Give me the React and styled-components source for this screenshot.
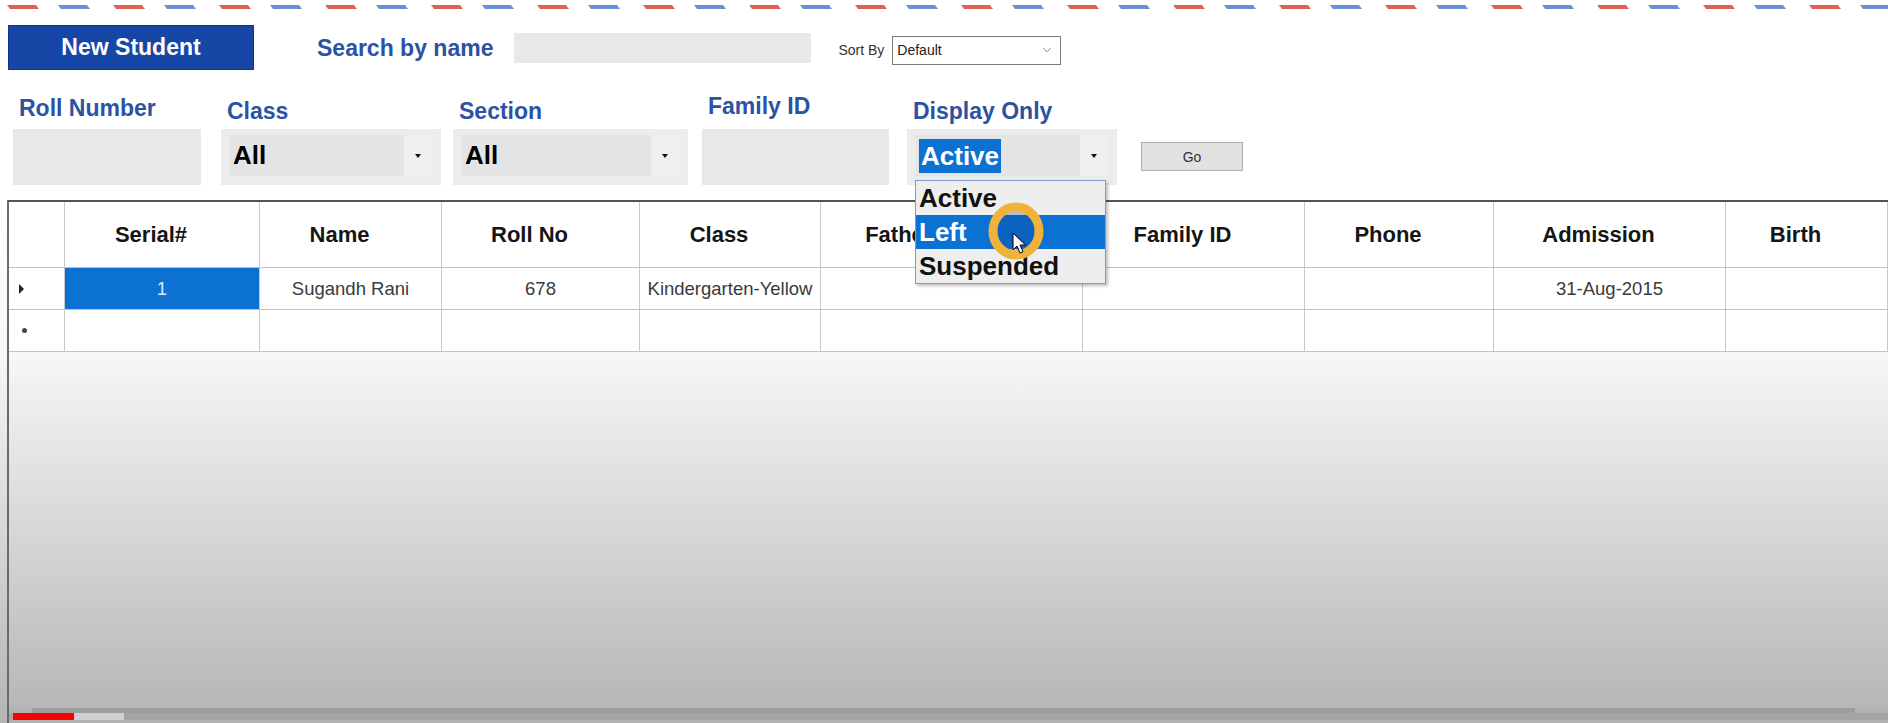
import React from "react";
import styled, { createGlobalStyle } from "styled-components";
import { ChevronDown } from "lucide-react";

const GlobalStyle = createGlobalStyle`
  html, body {
    margin: 0;
    padding: 0;
  }
  body {
    font-family: "Liberation Sans", Arial, sans-serif;
    background: #ffffff;
  }
`;

const Page = styled.div`
  width: 1888px;
  height: 723px;
  overflow: hidden;
  display: flex;
  flex-direction: column;
  background: #ffffff;
`;

const StripeBar = styled.div`
  height: 12px;
  flex-shrink: 0;

  svg {
    display: block;
  }
`;

const TopBar = styled.div`
  display: flex;
  align-items: center;
  height: 45px;
  margin-top: 13px;
  padding-left: 8px;
  flex-shrink: 0;
`;

const NewStudentButton = styled.button`
  width: 246px;
  height: 45px;
  background: #1747a6;
  border: 1px solid #0e3789;
  color: #ffffff;
  font-family: inherit;
  font-size: 23px;
  font-weight: bold;
  padding: 0;
`;

const BlueLabel = styled.span`
  color: #2b52a3;
  font-size: 23px;
  font-weight: bold;
  line-height: 26px;
  white-space: nowrap;
`;

const SearchLabel = styled(BlueLabel)`
  margin-left: 63px;
`;

const SearchInput = styled.div`
  margin-left: 21px;
  width: 297px;
  height: 30px;
  background: #e9e9e9;
`;

const SortLabel = styled.span`
  margin-left: 27px;
  font-size: 14px;
  color: #333333;
  margin-top: 4px;
`;

const SortSelect = styled.div`
  margin-left: 8px;
  margin-top: 5px;
  width: 169px;
  height: 29px;
  box-sizing: border-box;
  border: 1px solid #7a7a7a;
  background: #ffffff;
  display: flex;
  align-items: center;
  justify-content: space-between;
  padding: 0 6px 0 4px;
  font-size: 14px;
  color: #222222;
`;

const FilterRow = styled.div`
  display: flex;
  align-items: flex-end;
  height: 88px;
  margin-top: 27px;
  padding-left: 13px;
  flex-shrink: 0;
`;

const FilterGroup = styled.div`
  display: flex;
  flex-direction: column;
  width: ${(p) => p.$w}px;
  margin-left: ${(p) => p.$ml || 0}px;
`;

const FieldLabel = styled(BlueLabel)`
  height: 32px;
  box-sizing: border-box;
  display: flex;
  align-items: flex-end;
  padding-left: 6px;
  padding-bottom: ${(p) => p.$pb}px;
`;

const TextField = styled.div`
  height: 56px;
  background: #e8e8e8;
`;

const ComboPanel = styled.div`
  position: relative;
  height: 56px;
  box-sizing: border-box;
  background: #ececec;
  padding: 6px 9px 9px 9px;
  display: flex;
`;

const ComboField = styled.div`
  flex: 1;
  background: #e4e4e4;
  display: flex;
  align-items: center;
  padding-left: 3px;
  font-size: 26px;
  font-weight: bold;
  color: #000000;
`;

const ComboArrow = styled.div`
  width: 28px;
  background: #efefef;
  display: flex;
  align-items: center;
  justify-content: center;

  &::after {
    content: "";
    border-left: 3px solid transparent;
    border-right: 3px solid transparent;
    border-top: 4px solid #111111;
  }
`;

const SelectedText = styled.span`
  background: #0b72d4;
  color: #ffffff;
  height: 34px;
  line-height: 34px;
  padding: 0 2px;
`;

const DropList = styled.div`
  position: absolute;
  top: 51px;
  left: 8px;
  width: 191px;
  box-sizing: border-box;
  border: 1px solid #7f9ccb;
  background: #eeeeee;
  box-shadow: 2px 2px 3px rgba(0, 0, 0, 0.25);
  z-index: 5;
`;

const DropItem = styled.div`
  height: 34px;
  line-height: 34px;
  padding-left: 3px;
  font-size: 26px;
  font-weight: bold;
  color: ${(p) => (p.$active ? "#ffffff" : "#111111")};
  background: ${(p) => (p.$active ? "#0b72d4" : "transparent")};
`;

const CursorMark = styled.svg`
  position: absolute;
  left: 69px;
  top: 18px;
  pointer-events: none;
`;

const GoButton = styled.button`
  margin-left: 24px;
  margin-bottom: 14px;
  width: 102px;
  height: 29px;
  background: #e1e1e1;
  border: 1px solid #adadad;
  font-family: inherit;
  font-size: 14px;
  color: #333333;
  padding: 0;
`;

const GridSection = styled.div`
  flex: 1;
  margin-top: 15px;
  padding-left: 7px;
  display: flex;
  flex-direction: column;
  background: linear-gradient(
    to bottom,
    #ffffff 0%,
    #f8f8f8 28%,
    #d8d8d8 62%,
    #b4b4b4 100%
  );
`;

const GridBox = styled.div`
  flex: 1;
  display: flex;
  flex-direction: column;
  border-left: 2px solid #6b6b6b;
  border-top: 2px solid #555555;
`;

const columns = "56px 195px 182px 198px 181px 262px 222px 189px 232px 1fr";

const GridRow = styled.div`
  display: grid;
  grid-template-columns: ${columns};
  height: ${(p) => p.$h}px;
  background: #ffffff;
`;

const Cell = styled.div`
  display: flex;
  align-items: center;
  justify-content: center;
  padding-right: ${(p) => (p.$head ? 22 : 0)}px;
  border-right: 1px solid #c8c8c8;
  border-bottom: 1px solid #c3c3c3;
  white-space: nowrap;
  overflow: hidden;
  font-size: ${(p) => (p.$head ? 22 : 18.5)}px;
  font-weight: ${(p) => (p.$head ? "bold" : "normal")};
  color: ${(p) => (p.$selected ? "#dbe9f8" : p.$head ? "#151515" : "#3a3a3a")};
  background: ${(p) => (p.$selected ? "#0b72d4" : "#ffffff")};
`;

const RowMark = styled.div`
  display: flex;
  align-items: center;
  padding-left: 10px;
  border-right: 1px solid #c8c8c8;
  border-bottom: 1px solid #c3c3c3;
`;

const RowArrow = styled.span`
  border-top: 5px solid transparent;
  border-bottom: 5px solid transparent;
  border-left: 5px solid #222222;
`;

const RowDot = styled.span`
  width: 5px;
  height: 5px;
  margin-left: 3px;
  border-radius: 50%;
  background: #444444;
`;

const Filler = styled.div`
  flex: 1;
`;

const ScrollTrack = styled.div`
  height: 15px;
  display: flex;
  flex-direction: column;
  background: #b2b2b2;
`;

const ThumbBand = styled.div`
  height: 5px;
  margin: 0 33px 0 23px;
  background: #9d9d9d;
`;

const ProgressBand = styled.div`
  height: 7px;
  display: flex;
  background: #a4a4a4;
`;

const ProgressPart = styled.div`
  width: ${(p) => p.$w}px;
  margin-left: ${(p) => p.$ml || 0}px;
  background: ${(p) => p.$c};
`;

const headers = [
  "Serial#",
  "Name",
  "Roll No",
  "Class",
  "Father's Name",
  "Family ID",
  "Phone",
  "Admission",
  "Birth",
];

const rows = [
  ["1", "Sugandh Rani", "678", "Kindergarten-Yellow", "", "", "", "31-Aug-2015", ""],
  ["", "", "", "", "", "", "", "", ""],
];

function AirmailStripe() {
  return (
    <StripeBar>
      <svg width="1888" height="12">
        <defs>
          <pattern id="airmail" x="7" y="0" width="106" height="12" patternUnits="userSpaceOnUse">
            <polygon points="0,5 29,5 32,9 3,9" fill="#dd6455" />
            <polygon points="51,5 80,5 83,9 54,9" fill="#6a8fd4" />
          </pattern>
        </defs>
        <rect width="1888" height="12" fill="url(#airmail)" />
      </svg>
    </StripeBar>
  );
}

function Combo({ value, children }) {
  return (
    <ComboPanel>
      <ComboField>{value}</ComboField>
      <ComboArrow />
      {children}
    </ComboPanel>
  );
}

export default function App() {
  return (
    <>
      <GlobalStyle />
      <Page>
        <AirmailStripe />

        <TopBar>
          <NewStudentButton>New Student</NewStudentButton>
          <SearchLabel>Search by name</SearchLabel>
          <SearchInput />
          <SortLabel>Sort By</SortLabel>
          <SortSelect>
            <span>Default</span>
            <ChevronDown size={14} strokeWidth={1.3} color="#666" />
          </SortSelect>
        </TopBar>

        <FilterRow>
          <FilterGroup $w={188}>
            <FieldLabel $pb={8}>Roll Number</FieldLabel>
            <TextField />
          </FilterGroup>
          <FilterGroup $w={220} $ml={20}>
            <FieldLabel $pb={5}>Class</FieldLabel>
            <Combo value="All" />
          </FilterGroup>
          <FilterGroup $w={235} $ml={12}>
            <FieldLabel $pb={5}>Section</FieldLabel>
            <Combo value="All" />
          </FilterGroup>
          <FilterGroup $w={187} $ml={14}>
            <FieldLabel $pb={10}>Family ID</FieldLabel>
            <TextField />
          </FilterGroup>
          <FilterGroup $w={210} $ml={18}>
            <FieldLabel $pb={5}>Display Only</FieldLabel>
            <Combo value={<SelectedText>Active</SelectedText>}>
              <DropList>
                <DropItem>Active</DropItem>
                <DropItem $active>Left</DropItem>
                <DropItem>Suspended</DropItem>
                <CursorMark width="64" height="64" viewBox="0 0 64 64">
                  <ellipse cx="31" cy="32" rx="23" ry="24" fill="rgba(10,50,130,0.25)" stroke="#f0b23a" strokeWidth="9" />
                  <path
                    d="M28 34 L28 51 L32 47 L35 54 L38 52.7 L35 46 L40.5 46 Z"
                    fill="#ffffff"
                    stroke="#000000"
                    strokeWidth="1"
                    strokeLinejoin="round"
                  />
                </CursorMark>
              </DropList>
            </Combo>
          </FilterGroup>
          <GoButton>Go</GoButton>
        </FilterRow>

        <GridSection>
          <GridBox>
            <GridRow $h={66}>
              <Cell $head />
              {headers.map((h) => (
                <Cell $head key={h}>
                  {h}
                </Cell>
              ))}
            </GridRow>
            {rows.map((r, i) => (
              <GridRow $h={42} key={i}>
                <RowMark>{i === 0 ? <RowArrow /> : <RowDot />}</RowMark>
                {r.map((v, j) => (
                  <Cell key={j} $selected={i === 0 && j === 0}>
                    {v}
                  </Cell>
                ))}
              </GridRow>
            ))}
            <Filler />
            <ScrollTrack>
              <ThumbBand />
              <ProgressBand>
                <ProgressPart $ml={4} $w={61} $c="#ff0000" />
                <ProgressPart $w={50} $c="#d0d0d0" />
              </ProgressBand>
            </ScrollTrack>
          </GridBox>
        </GridSection>
      </Page>
    </>
  );
}
